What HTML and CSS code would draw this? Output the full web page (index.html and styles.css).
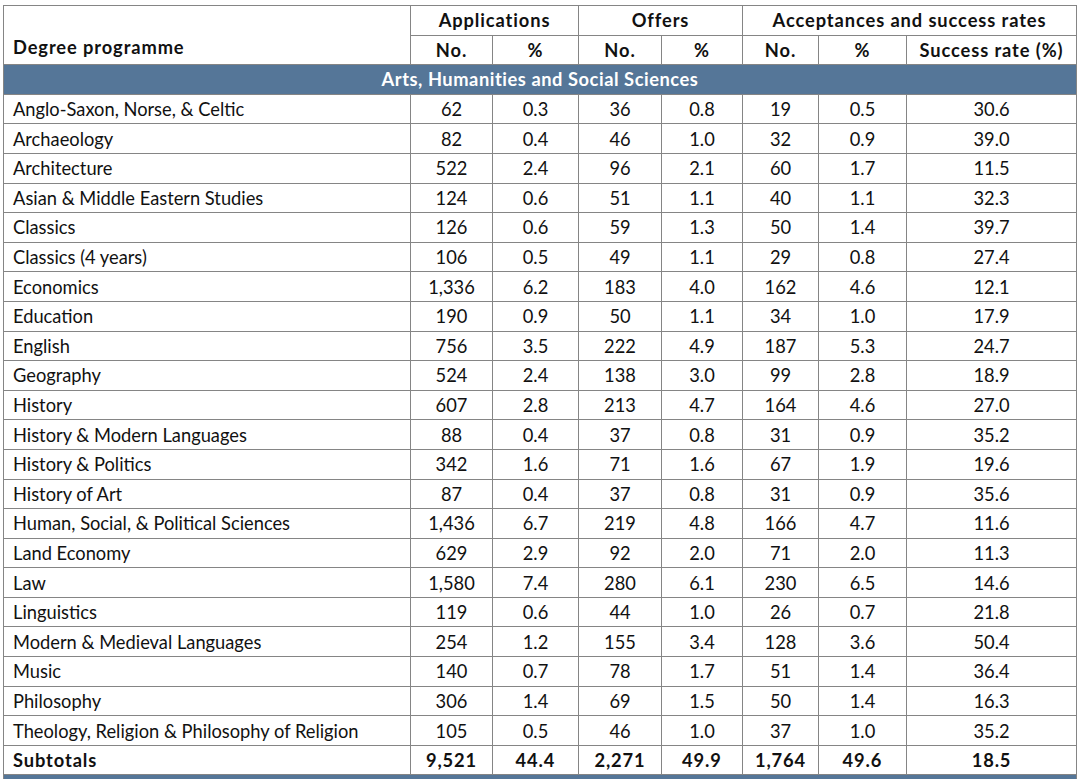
FILE: index.html
```html
<!DOCTYPE html>
<html>
<head>
<meta charset="utf-8">
<link rel="stylesheet" href="styles.css">
</head>
<body>
<div class="page">
<table class="data">
  <colgroup>
    <col class="c-name"><col class="c-n1"><col class="c-p1"><col class="c-n2"><col class="c-p2"><col class="c-n3"><col class="c-p3"><col class="c-rate">
  </colgroup>
  <thead>
    <tr class="h1">
      <th rowspan="2" class="name-head">Degree programme</th>
      <th colspan="2">Applications</th>
      <th colspan="2">Offers</th>
      <th colspan="3">Acceptances and success rates</th>
    </tr>
    <tr class="h2">
      <th>No.</th><th>%</th><th>No.</th><th>%</th><th>No.</th><th>%</th><th>Success rate (%)</th>
    </tr>
  </thead>
  <tbody>
    <tr class="section"><td colspan="8">Arts, Humanities and Social Sciences</td></tr>
    <tr><td>Anglo-Saxon, Norse, &amp; Celtic</td><td>62</td><td>0.3</td><td>36</td><td>0.8</td><td>19</td><td>0.5</td><td>30.6</td></tr>
    <tr><td>Archaeology</td><td>82</td><td>0.4</td><td>46</td><td>1.0</td><td>32</td><td>0.9</td><td>39.0</td></tr>
    <tr><td>Architecture</td><td>522</td><td>2.4</td><td>96</td><td>2.1</td><td>60</td><td>1.7</td><td>11.5</td></tr>
    <tr><td>Asian &amp; Middle Eastern Studies</td><td>124</td><td>0.6</td><td>51</td><td>1.1</td><td>40</td><td>1.1</td><td>32.3</td></tr>
    <tr><td>Classics</td><td>126</td><td>0.6</td><td>59</td><td>1.3</td><td>50</td><td>1.4</td><td>39.7</td></tr>
    <tr><td>Classics (4 years)</td><td>106</td><td>0.5</td><td>49</td><td>1.1</td><td>29</td><td>0.8</td><td>27.4</td></tr>
    <tr><td>Economics</td><td>1,336</td><td>6.2</td><td>183</td><td>4.0</td><td>162</td><td>4.6</td><td>12.1</td></tr>
    <tr><td>Education</td><td>190</td><td>0.9</td><td>50</td><td>1.1</td><td>34</td><td>1.0</td><td>17.9</td></tr>
    <tr><td>English</td><td>756</td><td>3.5</td><td>222</td><td>4.9</td><td>187</td><td>5.3</td><td>24.7</td></tr>
    <tr><td>Geography</td><td>524</td><td>2.4</td><td>138</td><td>3.0</td><td>99</td><td>2.8</td><td>18.9</td></tr>
    <tr><td>History</td><td>607</td><td>2.8</td><td>213</td><td>4.7</td><td>164</td><td>4.6</td><td>27.0</td></tr>
    <tr><td>History &amp; Modern Languages</td><td>88</td><td>0.4</td><td>37</td><td>0.8</td><td>31</td><td>0.9</td><td>35.2</td></tr>
    <tr><td>History &amp; Politics</td><td>342</td><td>1.6</td><td>71</td><td>1.6</td><td>67</td><td>1.9</td><td>19.6</td></tr>
    <tr><td>History of Art</td><td>87</td><td>0.4</td><td>37</td><td>0.8</td><td>31</td><td>0.9</td><td>35.6</td></tr>
    <tr><td>Human, Social, &amp; Political Sciences</td><td>1,436</td><td>6.7</td><td>219</td><td>4.8</td><td>166</td><td>4.7</td><td>11.6</td></tr>
    <tr><td>Land Economy</td><td>629</td><td>2.9</td><td>92</td><td>2.0</td><td>71</td><td>2.0</td><td>11.3</td></tr>
    <tr><td>Law</td><td>1,580</td><td>7.4</td><td>280</td><td>6.1</td><td>230</td><td>6.5</td><td>14.6</td></tr>
    <tr><td>Linguistics</td><td>119</td><td>0.6</td><td>44</td><td>1.0</td><td>26</td><td>0.7</td><td>21.8</td></tr>
    <tr><td>Modern &amp; Medieval Languages</td><td>254</td><td>1.2</td><td>155</td><td>3.4</td><td>128</td><td>3.6</td><td>50.4</td></tr>
    <tr><td>Music</td><td>140</td><td>0.7</td><td>78</td><td>1.7</td><td>51</td><td>1.4</td><td>36.4</td></tr>
    <tr><td>Philosophy</td><td>306</td><td>1.4</td><td>69</td><td>1.5</td><td>50</td><td>1.4</td><td>16.3</td></tr>
    <tr><td>Theology, Religion &amp; Philosophy of Religion</td><td>105</td><td>0.5</td><td>46</td><td>1.0</td><td>37</td><td>1.0</td><td>35.2</td></tr>
    <tr class="subtotal"><td>Subtotals</td><td>9,521</td><td>44.4</td><td>2,271</td><td>49.9</td><td>1,764</td><td>49.6</td><td>18.5</td></tr>
    <tr class="section"><td colspan="8"></td></tr>
  </tbody>
</table>
</div>
</body>
</html>
```

FILE: styles.css
```css
html, body {
  margin: 0;
  padding: 0;
  background: #ffffff;
}
.page {
  padding: 5px 0 0 3px;
  height: 779px;
  overflow: hidden;
  box-sizing: border-box;
}
.data {
  border-collapse: collapse;
  table-layout: fixed;
  width: 1073px;
  font-family: Lato, "Liberation Sans", sans-serif;
  font-size: 18.3px;
  color: #111;
}
.c-name { width: 407px; }
.c-n1 { width: 82px; }
.c-p1 { width: 86px; }
.c-n2 { width: 83px; }
.c-p2 { width: 81px; }
.c-n3 { width: 76px; }
.c-p3 { width: 88px; }
.c-rate { width: 170px; }
.data th, .data td {
  border: 1px solid #858585;
  padding: 0;
  text-align: center;
  white-space: nowrap;
}
.data th {
  font-weight: 700;
  letter-spacing: 0.9px;
  height: 28.6px;
}
.data .name-head {
  text-align: left;
  padding-left: 9px;
  vertical-align: bottom;
  padding-bottom: 6px;
}
.data td {
  height: 28.6px;
}
.data td:first-child {
  text-align: left;
  padding-left: 9px;
}
.section td, .data .section td:first-child {
  background: #557698;
  color: #ffffff;
  font-weight: 700;
  letter-spacing: 0.55px;
  text-align: center;
  padding-left: 0;
}
.subtotal td {
  font-weight: 700;
  letter-spacing: 0.9px;
}
```
